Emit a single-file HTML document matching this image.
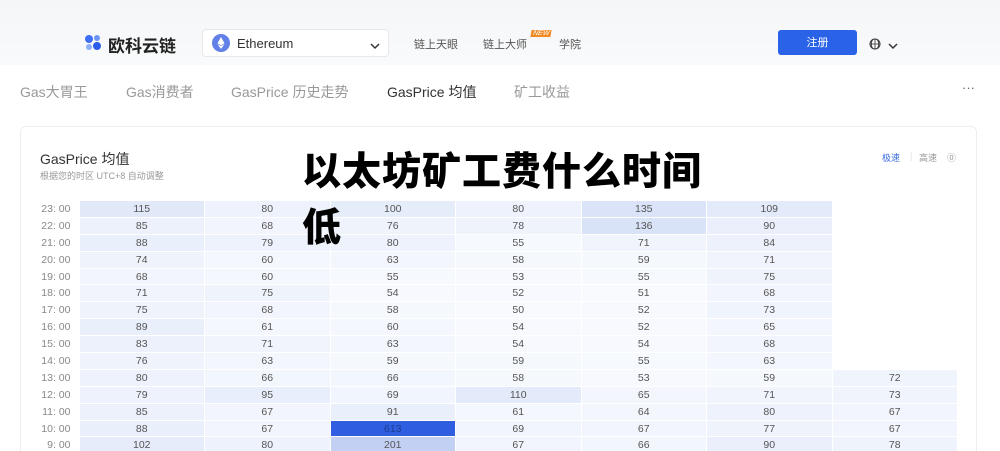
<!DOCTYPE html>
<html><head><meta charset="utf-8"><style>
*{margin:0;padding:0;box-sizing:border-box}
html,body{width:1000px;height:451px;overflow:hidden}
body{background:#fff;font-family:"Liberation Sans","Noto Sans CJK SC",sans-serif;position:relative;color:#333}
.hdr{position:absolute;left:0;top:0;width:1000px;height:65px;background:linear-gradient(#f5f6f8,#f9fafb)}
.a{position:absolute;white-space:nowrap}
.tab{position:absolute;top:82px;font-size:14px;color:#999}
.card{position:absolute;left:20px;top:126px;width:957px;height:340px;border:1px solid #eceef2;border-radius:6px;background:#fff}
table{position:absolute;left:36px;top:200px;border-collapse:collapse;font-size:10.5px;color:#555}
td{height:16.9px;width:125.5px;text-align:center;border:1px solid #fff;padding:0}
td.h{width:43px;text-align:right;padding-right:8px;color:#888;border:none}
.ov{position:absolute;font-weight:900;font-size:39px;color:#000;letter-spacing:1px;font-family:"Noto Sans CJK SC",sans-serif}
</style></head><body>
<div class="hdr"></div>
<div class="a" style="left:84px;top:34px"><svg width="18" height="18"><circle cx="5" cy="5" r="4" fill="#3d6ff5"/><circle cx="13" cy="4" r="3" fill="#6b95f7"/><circle cx="5" cy="13" r="3" fill="#8eaef8"/><circle cx="13" cy="12" r="4" fill="#2b5de8"/></svg></div>
<div class="a" style="left:108px;top:32px;font-size:17px;font-weight:bold;color:#222">欧科云链</div>
<div class="a" style="left:202px;top:29px;width:187px;height:28px;background:#fff;border:1px solid #e6e8ec;border-radius:4px"></div>
<div class="a" style="left:212px;top:34px;width:18px;height:18px;border-radius:50%;background:#6281e8"><svg width="18" height="18"><path d="M9 3L5.5 9.3 9 11.3 12.5 9.3Z M9 12L5.5 10 9 15 12.5 10Z" fill="#fff"/></svg></div>
<div class="a" style="left:237px;top:36px;font-size:13px;color:#333">Ethereum</div>
<div class="a" style="left:370px;top:38px"><svg width="10" height="10"><path d="M1 3l4 4 4-4" stroke="#333" stroke-width="1.5" fill="none"/></svg></div>
<div class="a" style="left:414px;top:36px;font-size:11px;color:#555">链上天眼</div>
<div class="a" style="left:483px;top:36px;font-size:11px;color:#555">链上大师</div>
<div class="a" style="left:531px;top:30px;font-size:7px;color:#fff;background:#f08a24;padding:0 2px;font-style:italic;transform:skew(-10deg)">NEW</div>
<div class="a" style="left:559px;top:36px;font-size:11px;color:#555">学院</div>
<div class="a" style="left:778px;top:30px;width:79px;height:25px;background:#2a62e8;border-radius:3px;color:#fff;font-size:11px;text-align:center;line-height:26px">注册</div>
<div class="a" style="left:869px;top:37px"><svg width="12" height="12"><circle cx="6" cy="6" r="5" stroke="#333" fill="none"/><path d="M1 6h10M6 1v10M3.5 2c-1.5 2.5-1.5 5.5 0 8M8.5 2c1.5 2.5 1.5 5.5 0 8" stroke="#333" fill="none" stroke-width=".8"/></svg></div>
<div class="a" style="left:888px;top:38px"><svg width="10" height="10"><path d="M1 3l4 4 4-4" stroke="#333" stroke-width="1.5" fill="none"/></svg></div>
<div class="tab" style="left:20px">Gas大胃王</div>
<div class="tab" style="left:126px">Gas消费者</div>
<div class="tab" style="left:231px">GasPrice 历史走势</div>
<div class="tab" style="left:387px;color:#333">GasPrice 均值</div>
<div class="tab" style="left:514px">矿工收益</div>
<div class="a" style="left:962px;top:80px;font-size:13px;color:#666">···</div>
<div class="card"></div>
<div class="a" style="left:40px;top:149px;font-size:14px;color:#333">GasPrice 均值</div>
<div class="a" style="left:40px;top:169px;font-size:9px;color:#999">根据您的时区 UTC+8 自动调整</div>
<div class="a" style="left:882px;top:151px;font-size:9px;color:#3b6fe0">极速</div>
<div class="a" style="left:910px;top:151px;font-size:9px;color:#ddd">|</div>
<div class="a" style="left:919px;top:151px;font-size:9px;color:#999">高速</div>
<div class="a" style="left:947px;top:151px;font-size:9px;color:#999">⓪</div>
<table id="t"></table>
<div class="ov" style="left:302px;top:141px">以太坊矿工费什么时间</div>
<div class="ov" style="left:302px;top:197px">低</div>
<script>
var d=[[115,80,100,80,135,109],[85,68,76,78,136,90],[88,79,80,55,71,84],[74,60,63,58,59,71],[68,60,55,53,55,75],[71,75,54,52,51,68],[75,68,58,50,52,73],[89,61,60,54,52,65],[83,71,63,54,54,68],[76,63,59,59,55,63],[80,66,66,58,53,59,72],[79,95,69,110,65,71,73],[85,67,91,61,64,80,67],[88,67,613,69,67,77,67],[102,80,201,67,66,90,78]];
var h="";
for(var i=0;i<15;i++){var hr=23-i;h+="<tr><td class='h'>"+hr+": 00</td>";
for(var j=0;j<7;j++){var v=d[i][j];if(v===undefined){h+="<td style='background:#fff'></td>";continue}
var bg,c="#555";
if(v>500){bg="#2f5fe0";c="#1d3a90"}else if(v>180){bg="#c2d0f4"}else{var t=Math.max(0,Math.min(1,(v-50)/90));var r=Math.round(248-t*(248-216)),g=Math.round(250-t*(250-226)),b=Math.round(254-t*(254-247));bg="rgb("+r+","+g+","+b+")"}
h+="<td style='background:"+bg+";color:"+c+"'>"+v+"</td>"}
h+="</tr>"}
document.getElementById("t").innerHTML=h;
</script>
</body></html>
